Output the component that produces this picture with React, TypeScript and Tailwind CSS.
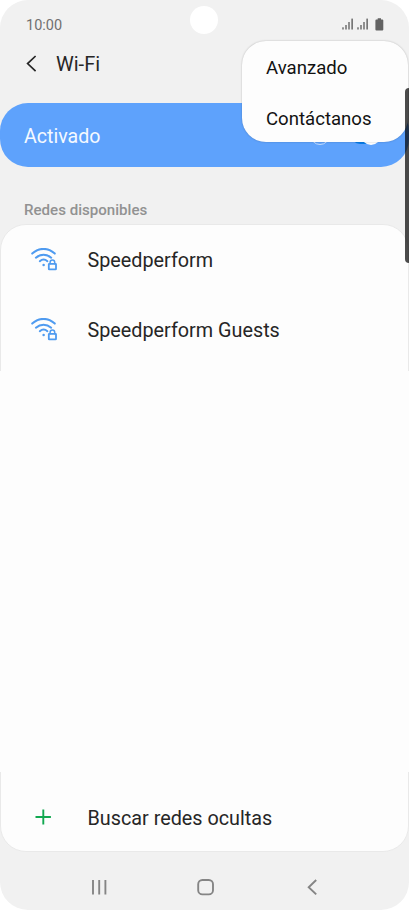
import React from 'react';

interface Network {
  id: number;
  name: string;
}

const networks: Network[] = [
  { id: 1, name: 'Speedperform' },
  { id: 2, name: 'Speedperform Guests' },
];

const menuItems = ['Avanzado', 'Contáctanos'];

const SignalIcon: React.FC = () => (
  <svg width="12" height="12" viewBox="0 0 12 12" fill="#777777">
    <rect x="0.2" y="9.3" width="1.6" height="2.2" />
    <rect x="3.2" y="7" width="1.6" height="4.5" />
    <rect x="6.2" y="4" width="1.6" height="7.5" />
    <rect x="9.3" y="0.6" width="1.7" height="10.9" />
  </svg>
);

const BatteryIcon: React.FC = () => (
  <svg width="9" height="13" viewBox="0 0 9 13" fill="#626262">
    <path d="M2.7 0.3h3.3v1.2h1.3a1 1 0 0 1 1 1v9a1 1 0 0 1-1 1H1.4a1 1 0 0 1-1-1v-9a1 1 0 0 1 1-1h1.3z" />
  </svg>
);

const WifiLockIcon: React.FC = () => (
  <svg width="27" height="24" viewBox="0 0 27 24" fill="none" stroke="#4f9bf0" strokeWidth="2" strokeLinecap="round">
    <path d="M1.2 5.6C8.1-0.7 16.9-0.7 23.8 5.6" />
    <path d="M4.9 9.7c4.6-4 10.7-4 15.3 0" />
    <path d="M8.8 13.2c2.3-2 5.3-2 7.6 0" />
    <circle cx="12.6" cy="17" r="1.25" fill="#4f9bf0" stroke="none" />
    <path d="M19.1 15.8v-1.6a2.3 2.3 0 0 1 4.6 0v1.6" strokeWidth="1.5" />
    <rect x="17.8" y="15.8" width="7.2" height="5.6" rx="0.5" strokeWidth="1.8" />
  </svg>
);

const StatusBar: React.FC = () => (
  <div className="flex h-[48px] items-center justify-between pl-[26px] pr-[25px]">
    <span className="mt-[4px] text-[14.5px] leading-none text-[#707070]">10:00</span>
    <div className="flex items-center gap-[3px]">
      <SignalIcon />
      <SignalIcon />
      <div className="ml-[3px]">
        <BatteryIcon />
      </div>
    </div>
  </div>
);

const NavBar: React.FC = () => (
  <div className="mt-[26px] flex h-[18px] items-center pl-[90px]">
    <svg width="18" height="18" viewBox="0 0 18 18" fill="none" stroke="#858585" strokeWidth="1.9">
      <path d="M3 2v14.5M9.2 2v14.5M15.4 2v14.5" />
    </svg>
    <svg className="ml-[89px]" width="18" height="18" viewBox="0 0 18 18" fill="none" stroke="#858585" strokeWidth="1.9">
      <rect x="1.2" y="2" width="14.8" height="14.4" rx="4.2" />
    </svg>
    <svg className="ml-[88px]" width="18" height="18" viewBox="0 0 18 18" fill="none" stroke="#858585" strokeWidth="1.9">
      <path d="M13.2 2L5.7 9.2L13.2 16.4" />
    </svg>
  </div>
);

const App: React.FC = () => {
  return (
    <div className="h-[910px] w-[409px] overflow-hidden bg-white font-['Roboto',sans-serif]">
      <div className="relative flex h-full flex-col overflow-hidden rounded-[28px] bg-[#f1f1f1]">
        <StatusBar />
        {/* front camera */}
        <div className="absolute left-[190px] top-[6px] size-[28px] rounded-full bg-white" />

        <header className="flex h-[32px] items-center pl-[26px]">
          <svg width="12" height="18" viewBox="0 0 12 18" fill="none" stroke="#262626" strokeWidth="1.7">
            <path d="M9.6 1L1.6 8.6L9.6 16.2" />
          </svg>
          <h1 className="ml-[18px] text-[20px] leading-none text-[#262626]">Wi-Fi</h1>
        </header>

        <div className="mt-[23px] flex h-[64px] shrink-0 items-center rounded-[28px] bg-[#5ea2fc] pl-[24px] pr-[28px]">
          <span className="flex-1 pt-[3px] text-[19.6px] text-[#f4f9ff]">Activado</span>
          <div className="mr-[21px] size-[20px] rounded-full border border-[#c3dcfd]" />
          <div className="flex h-[18px] w-[30px] items-center justify-end rounded-full bg-[#087ce8]">
            <div className="size-[20px] shrink-0 rounded-full bg-white" />
          </div>
        </div>

        <h2 className="mt-[34px] pl-[24px] text-[15.1px] font-medium leading-[18px] text-[#929292]">Redes disponibles</h2>

        <section className="relative mt-[5px] flex h-[628px] shrink-0 flex-col rounded-[26px] border border-[#e9e9e9] bg-[#fdfdfd]">
          {/* the side borders fade out in the empty part of the list */}
          <div className="absolute -inset-x-px bottom-[79px] top-[146px] bg-[#fdfdfd]" />
          {networks.map((network) => (
            <div key={network.id} className="flex h-[70px] items-center pl-[30px]">
              <WifiLockIcon />
              <span className="ml-[29.5px] pt-[2px] text-[19.8px] text-[#262626]">{network.name}</span>
            </div>
          ))}
          <div className="mt-auto flex h-[68px] items-center pl-[34px]">
            <svg width="16" height="16" viewBox="0 0 16 16" stroke="#11a850" strokeWidth="1.9">
              <path d="M8.3 0.5v15M0.5 8h15.4" />
            </svg>
            <span className="ml-[36.5px] pt-[4px] text-[19.8px] text-[#262626]">Buscar redes ocultas</span>
          </div>
        </section>

        <NavBar />

        {/* overflow menu */}
        <div className="absolute left-[242px] top-[41px] flex h-[101px] w-[166px] flex-col rounded-[24px] bg-[#fdfdfd] pl-[24px] pt-px shadow-[0_0_2px_rgba(0,0,0,0.25)]">
          {menuItems.map((item) => (
            <button key={item} className="h-[51px] shrink-0 pt-[3px] text-left text-[18.6px] text-[#121212]">
              {item}
            </button>
          ))}
        </div>

        {/* edge panel handle */}
        <div className="absolute right-0 top-[88px] h-[175px] w-[4px] rounded-l-[4px] bg-black/70" />
      </div>
    </div>
  );
};

export default App;
